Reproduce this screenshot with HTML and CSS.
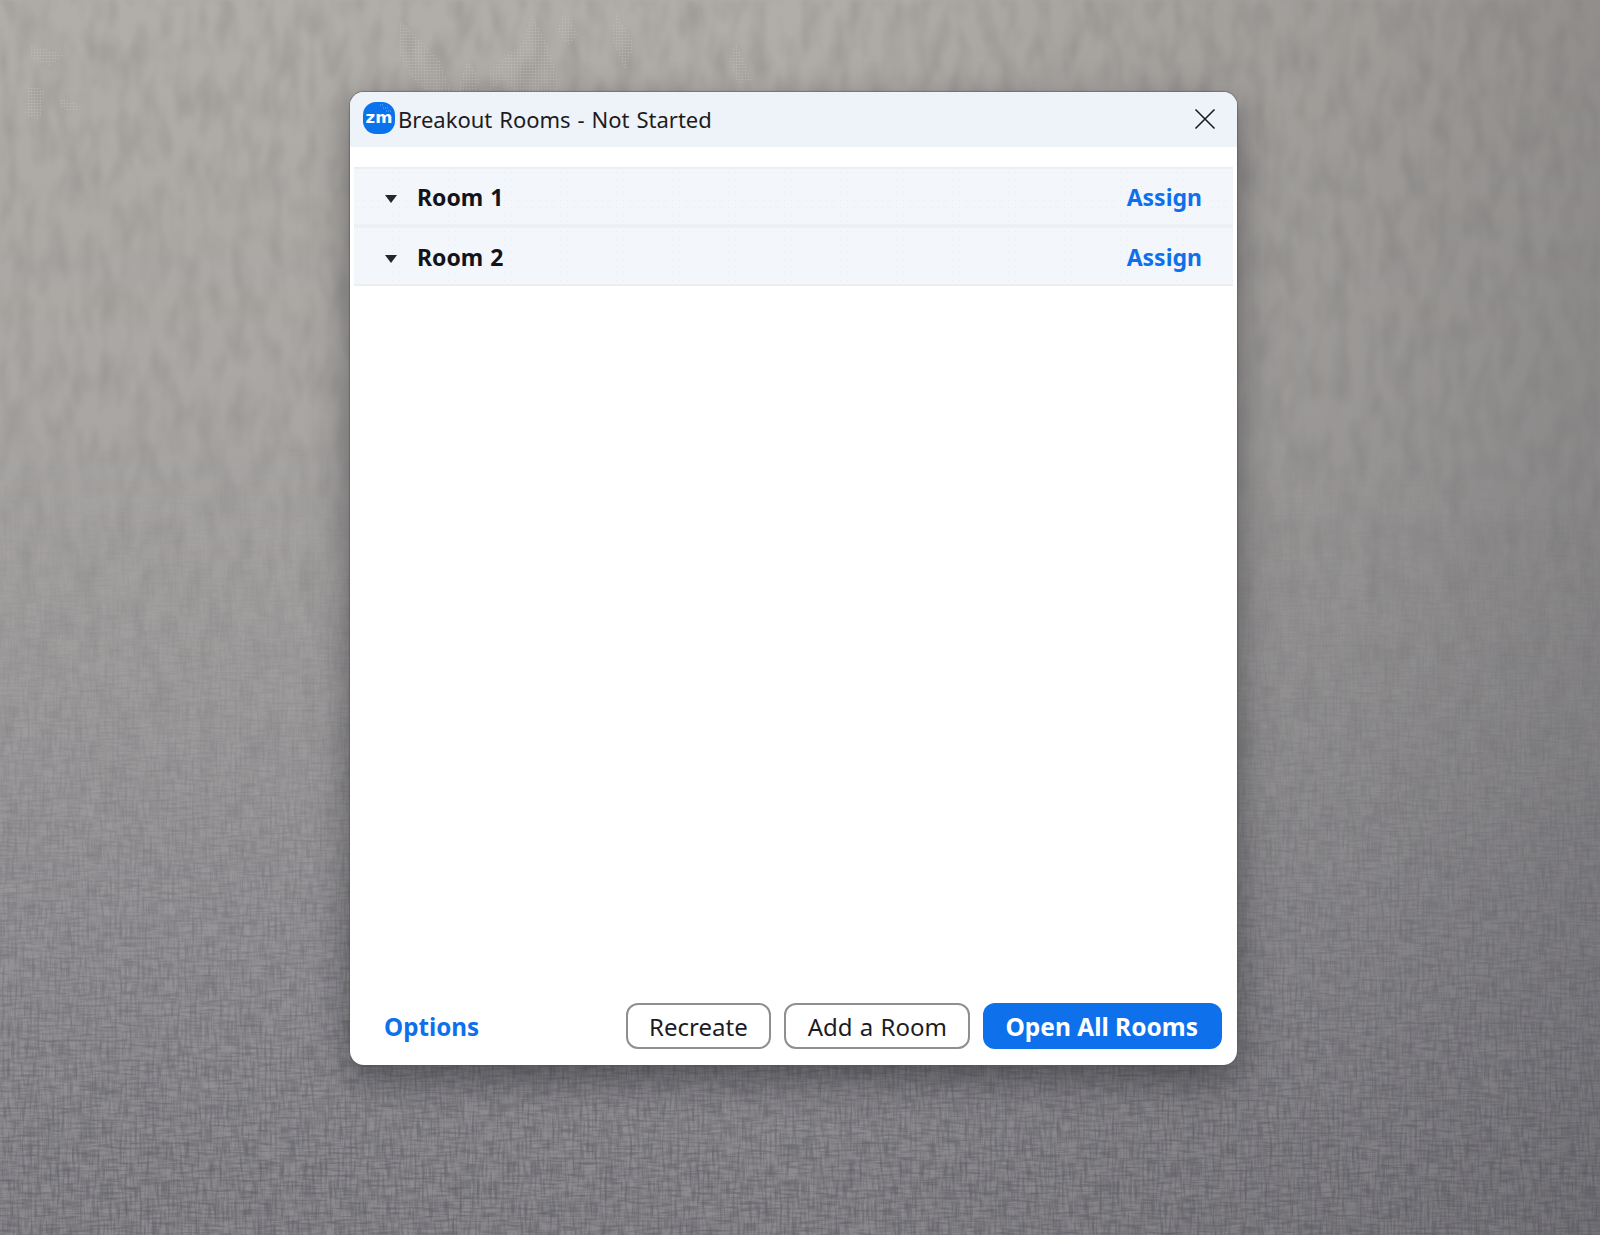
FILE: index.html
```html
<!DOCTYPE html>
<html lang="en">
<head>
    <meta charset="UTF-8">
    <meta name="viewport" content="width=device-width, initial-scale=1.0">
    <title>Breakout Rooms</title>
    <link rel="stylesheet" href="styles.css">
</head>
<body>
    <svg class="textureClass" width="1600" height="1235" aria-hidden="true">
        <defs>
            <filter id="patches" x="0" y="0" width="100%" height="100%" color-interpolation-filters="sRGB">
                <feTurbulence type="fractalNoise" baseFrequency="0.06 0.025" numOctaves="2" seed="7"/>
                <feColorMatrix type="matrix" values="0 0 0 0 0.3  0 0 0 0 0.3  0 0 0 0 0.31  0 0 0 1.1 -0.42"/>
                <feGaussianBlur stdDeviation="1.5"/>
            </filter>
            <filter id="threadsH" x="0" y="0" width="100%" height="100%" color-interpolation-filters="sRGB">
                <feTurbulence type="fractalNoise" baseFrequency="0.05 0.4" numOctaves="2" seed="11"/>
                <feColorMatrix type="matrix" values="0 0 0 0 0.28  0 0 0 0 0.28  0 0 0 0 0.31  0 0 0 1.6 -0.62"/>
                <feGaussianBlur stdDeviation="0.6"/>
            </filter>
            <filter id="threadsV" x="0" y="0" width="100%" height="100%" color-interpolation-filters="sRGB">
                <feTurbulence type="fractalNoise" baseFrequency="0.4 0.05" numOctaves="2" seed="23"/>
                <feColorMatrix type="matrix" values="0 0 0 0 0.28  0 0 0 0 0.28  0 0 0 0 0.31  0 0 0 1.6 -0.62"/>
                <feGaussianBlur stdDeviation="0.6"/>
            </filter>
            <linearGradient id="fadeTop" x1="0" y1="0" x2="0" y2="1">
                <stop offset="0" stop-color="#fff"/>
                <stop offset="0.45" stop-color="#ccc"/>
                <stop offset="0.8" stop-color="#333"/>
            </linearGradient>
            <linearGradient id="fadeBottom" x1="0" y1="0" x2="0" y2="1">
                <stop offset="0.35" stop-color="#000"/>
                <stop offset="0.6" stop-color="#555"/>
                <stop offset="0.95" stop-color="#fff"/>
            </linearGradient>
            <mask id="maskTop"><rect width="1600" height="1235" fill="url(#fadeTop)"/></mask>
            <mask id="maskBottom"><rect width="1600" height="1235" fill="url(#fadeBottom)"/></mask>
            <pattern id="stipple" width="3" height="3" patternUnits="userSpaceOnUse">
                <circle cx="1.5" cy="1.5" r="0.8" fill="#c6c3c0"/>
            </pattern>
        </defs>
        <g mask="url(#maskTop)" opacity="0.3"><rect width="1600" height="1235" filter="url(#patches)"/></g>
        <g mask="url(#maskBottom)" opacity="0.6">
            <rect width="1600" height="1235" filter="url(#threadsH)"/>
            <rect width="1600" height="1235" filter="url(#threadsV)"/>
        </g>
        <g fill="url(#stipple)" opacity="0.6">
            <path d="M400 20 L420 40 L440 60 L452 95 L440 105 L425 90 L410 75 L398 50Z"/>
            <path d="M468 60 L480 80 L470 105 L458 100 L460 80Z"/>
            <path d="M490 70 L520 45 L532 15 L550 50 L560 85 L550 110 L530 125 L522 100 L505 80 L490 90Z"/>
            <path d="M565 10 L578 35 L568 45 L556 30Z"/>
            <path d="M615 10 L635 45 L625 70 L612 40Z"/>
            <path d="M735 40 L752 80 L738 85 L730 60Z"/>
            <path d="M30 45 L50 50 L65 55 L50 65 L32 60Z"/>
            <path d="M28 85 L45 90 L40 120 L25 115Z"/>
            <path d="M60 98 L80 105 L75 112 L60 108Z"/>
        </g>
    </svg>

    <div class="windowClass">
        <div class="titleBarClass">
            <svg class="logoClass" width="32" height="32" viewBox="0 0 32 32">
                <rect width="32" height="32" rx="13" fill="#0b72ed"/>
                <path d="M17 3 L21 3 M20 6 L25 6 M23 9 L28 9" stroke="#6aa8f5" stroke-width="1" stroke-dasharray="1 1" fill="none"/>
                <text x="16" y="20.5" text-anchor="middle" class="logoTextClass">zm</text>
            </svg>
            <div class="titleTextClass">Breakout Rooms - Not Started</div>
            <svg class="closeClass" width="22" height="22" viewBox="0 0 22 22">
                <path d="M1.5 1.5 L20.5 20.5 M20.5 1.5 L1.5 20.5" stroke="#1c1c22" stroke-width="1.6" fill="none"/>
            </svg>
        </div>

        <div class="roomListClass">
            <div class="roomRowClass">
                <span class="arrowClass"></span>
                <span class="roomNameClass">Room 1</span>
                <span class="assignClass">Assign</span>
            </div>
            <div class="roomRowClass">
                <span class="arrowClass"></span>
                <span class="roomNameClass">Room 2</span>
                <span class="assignClass">Assign</span>
            </div>
        </div>

        <div class="footerClass">
            <span class="optionsClass">Options</span>
            <div class="buttonsClass">
                <div class="buttonClass">Recreate</div>
                <div class="buttonClass">Add a Room</div>
                <div class="buttonClass primaryClass">Open All Rooms</div>
            </div>
        </div>
    </div>
</body>
</html>
```

FILE: styles.css
```css
html, body{
    margin: 0;
    height: 100%;
}
body{
    width: 1600px;
    height: 1235px;
    position: relative;
    overflow: hidden;
    font-family: "Noto Sans", "Open Sans", sans-serif;
    background:
        linear-gradient(90deg, rgba(70,70,75,0) 50%, rgba(70,70,75,0.16) 85%, rgba(70,70,75,0.3) 100%),
        linear-gradient(180deg, #b1ada8 0%, #aaa7a4 30%, #a09e9e 55%, #949296 80%, #8c8a8e 100%);
}
.textureClass{
    position: absolute;
    left: 0;
    top: 0;
}
.windowClass{
    position: absolute;
    left: 350px;
    top: 92px;
    width: 887px;
    height: 973px;
    box-sizing: border-box;
    display: flex;
    flex-direction: column;
    background: #fff;
    border-radius: 14px;
    box-shadow: 0 0 1px 1px rgba(90,85,85,0.55), 0 14px 36px rgba(30,30,35,0.5);
}
.titleBarClass{
    height: 55px;
    flex: none;
    display: flex;
    align-items: center;
    padding: 0 21px 0 13px;
    background: #eef2f9;
    border-radius: 14px 14px 0 0;
}
.logoClass{
    flex: none;
    margin-bottom: 3px;
}
.logoTextClass{
    font-family: "DejaVu Sans", sans-serif;
    font-size: 16.5px;
    font-weight: 700;
    fill: #fff;
}
.titleTextClass{
    flex: 1;
    margin: 0 0 2px 3px;
    font-size: 22px;
    word-spacing: 1.2px;
    color: #1c1c22;
    white-space: nowrap;
}
.closeClass{
    flex: none;
    margin-bottom: 2px;
}
.roomListClass{
    flex: 1;
    margin: 20px 4px 0;
}
.roomRowClass{
    height: 55px;
    display: flex;
    align-items: center;
    padding: 0 31px 0 31px;
    background-color: #f3f6fa;
    background-image: radial-gradient(circle, #e9edf3 0.6px, transparent 0.8px);
    background-size: 7px 7px;
    border-top: 2px solid #eceef1;
    border-bottom: 4px solid #eff0f3;
}
.roomRowClass + .roomRowClass{
    height: 55px;
    padding-top: 1px;
    border-top: 0;
    border-bottom: 2px solid #eceef1;
}
.arrowClass{
    width: 0;
    height: 0;
    border-left: 6px solid transparent;
    border-right: 6px solid transparent;
    border-top: 8px solid #26262c;
    margin: 4px 20px 0 0;
}
.roomNameClass{
    flex: 1;
    font-size: 23px;
    font-weight: 700;
    word-spacing: 1px;
    color: #13131a;
}
.assignClass{
    font-size: 23px;
    font-weight: 700;
    color: #0e71eb;
}
.footerClass{
    flex: none;
    display: flex;
    align-items: center;
    justify-content: space-between;
    padding: 0 15px 16px 34px;
}
.optionsClass{
    font-size: 24.2px;
    font-weight: 700;
    color: #0e71eb;
}
.buttonsClass{
    display: flex;
    gap: 13px;
}
.buttonClass{
    height: 46px;
    box-sizing: border-box;
    padding: 0 21.5px;
    display: flex;
    align-items: center;
    border: 2px solid #8f8f93;
    border-radius: 12px;
    font-size: 24px;
    word-spacing: 1px;
    color: #1c1c22;
    background: #fff;
}
.primaryClass{
    border: 0;
    padding: 0 24px 0 22px;
    font-size: 24.5px;
    word-spacing: 0;
    background: #0e71eb;
    color: #fff;
    font-weight: 700;
}
```
